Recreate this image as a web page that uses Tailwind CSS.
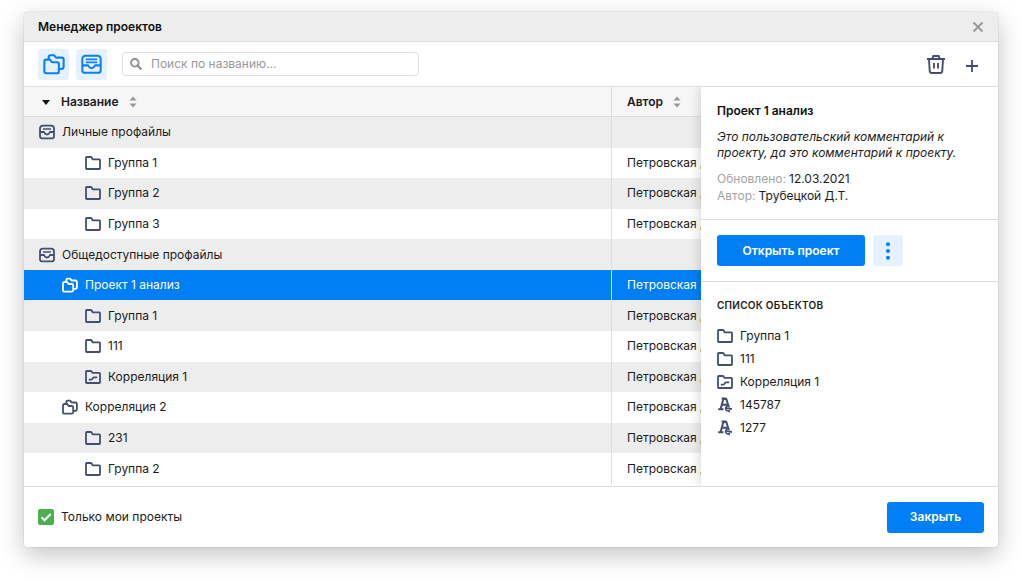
<!DOCTYPE html>
<html lang="ru">
<head>
<meta charset="utf-8">
<meta name="viewport" content="width=device-width, initial-scale=1">
<title>Менеджер проектов</title>
<script src="https://cdn.jsdelivr.net/npm/@tailwindcss/browser@4"></script>
</head>
<body class="flex h-screen flex-col bg-white px-6 pt-3 pb-[35px] font-['Inter',sans-serif] text-xs text-[#1c1c1c]">
<svg class="hidden" aria-hidden="true">
  <symbol id="folder" viewBox="0 0 16 16"><path d="M1 13.300V2.700q0-.7.7-.7h4.100q.5 0 .8.500l.9 1.500q.2.400.7.400h6.100q.7 0 .7.700v8.200q0 .7-.7.700H1.700q-.7 0-.7-.7Z" fill="none" stroke="currentColor" stroke-width="1.800"/></symbol>
  <symbol id="chart" viewBox="0 0 16 16"><path d="M1 13.300V2.700q0-.7.7-.7h4.100q.5 0 .8.500l.7 1q.2.400.7.400h6.300q.7 0 .7.700v8.700q0 .7-.7.700H1.700q-.7 0-.7-.7Z" fill="none" stroke="currentColor" stroke-width="1.800"/><path d="M3.800 10.600h2.400q.8 0 1.200-.7l.4-.8q.4-.7 1.200-.7h3.200" fill="none" stroke="currentColor" stroke-width="1.800"/></symbol>
  <symbol id="folders" viewBox="0 0 24 24"><path d="M1.500 9.200q0-2 2-2h3.600q.8 0 1.200.7l1 1.600q.4.600 1.200.600h4.800q2 0 2 2v8q0 2-2 2H3.500q-2 0-2-2Z" fill="none" stroke="currentColor" stroke-width="2.300" stroke-linejoin="round"/><path d="M6.200 7V4.400q0-2 2-2h3.300q.8 0 1.200.7l.8 1.300q.4.600 1.200.600h5.600q2.200 0 2.200 2.200v7.600q0 2.700-2.700 2.700h-2.300" fill="none" stroke="currentColor" stroke-width="2.300" stroke-linejoin="round"/></symbol>
  <symbol id="folders-small" viewBox="0 0 16 16"><path d="M1 6.400q0-1.400 1.400-1.400h2.400q.5 0 .8.500l.7 1.100q.3.400.8.400h2.700q1.400 0 1.400 1.400v4.800q0 1.400-1.400 1.400H2.400Q1 14.600 1 13.200Z" fill="none" stroke="currentColor" stroke-width="1.800"/><path d="M4.300 5V3q0-1.400 1.400-1.400h2.100q.5 0 .8.500l.7 1q.3.400.8.400h3.400q1.400 0 1.400 1.400v5q0 1.900-1.900 1.900h-1.500" fill="none" stroke="currentColor" stroke-width="1.800"/></symbol>
  <symbol id="tray" viewBox="0 0 24 24"><path d="M1.500 13V6q0-4 4-4h13q4 0 4 4v7M1.500 13v5.500q0 3 3 3h15q3 0 3-3V13h-6q-.6 0-.9.600-1.200 2.600-3.600 2.600t-3.600-2.600q-.3-.6-.9-.6Z" fill="none" stroke="currentColor" stroke-width="2.300" stroke-linejoin="round"/><path d="M5.500 6.200h13M5.500 9.700h13" stroke="currentColor" stroke-width="2"/></symbol>
  <symbol id="tray-small" viewBox="0 0 16 16"><path d="M1 8V4.500Q1 1.700 3.800 1.700h8.400Q15 1.700 15 4.500V8M1 8v4.300q0 2 2 2h10q2 0 2-2V8h-3.700q-.4 0-.6.500-.8 2-2.700 2t-2.700-2Q5.100 8 4.700 8Z" fill="none" stroke="currentColor" stroke-width="1.800"/><path d="M4 5.100h8" stroke="currentColor" stroke-width="1.500"/></symbol>
  <symbol id="sort" viewBox="0 0 8 12"><path d="M4 .5 7.500 4.500H.5ZM4 11.500.5 7.500h7Z" fill="#999"/></symbol>
  <symbol id="glyph" viewBox="0 0 16 16"><path d="M3.600 12 6.400 2h2.900l2.200 7M5.300 7.800h4.900M4.600 1.600h4.600M1.200 12.200h5.300" fill="none" stroke="currentColor" stroke-width="2"/><path d="M12.600 9.600q-1.700-1.200-3.200.1-1.500 1.700-.1 3.400 1.600 1.400 3.500-.1M9 11.300h4.300M11.300 13.400l1.500 1.900M12.600 11.900h2.400" fill="none" stroke="currentColor" stroke-width="1.600"/></symbol>
</svg>

<main class="flex min-h-0 flex-1 flex-col overflow-clip rounded-[4px] bg-white shadow-[0_0_1px_rgba(0,0,0,0.4),0_8px_24px_rgba(0,0,0,0.24)]" role="dialog" aria-labelledby="title">
  <header class="flex h-[30px] shrink-0 items-center justify-between border-b border-[#dcdcdc] bg-[#ededed] px-[14px]">
    <h1 id="title" class="font-semibold text-[#111]">Менеджер проектов</h1>
    <button type="button" aria-label="Закрыть окно" class="text-[#999]"><svg class="size-3" viewBox="0 0 12 12"><path d="m1.500 1.500 9 9m0-9-9 9" stroke="currentColor" stroke-width="2"/></svg></button>
  </header>

  <div class="flex h-[45px] shrink-0 items-center border-b border-[#dcdcdc] pr-5 pl-[14px]">
    <button type="button" aria-label="Проекты" class="flex size-[31px] items-center justify-center rounded-[3px] bg-[#e5f1ff] text-[#0880f8]"><svg class="size-[22px]"><use href="#folders"/></svg></button>
    <button type="button" aria-label="Профайлы" class="ml-[7px] flex size-[31px] items-center justify-center rounded-[3px] bg-[#e5f1ff] text-[#0880f8]"><svg class="size-[21px]"><use href="#tray"/></svg></button>
    <label class="ml-[15px] flex h-6 w-[297px] items-center rounded-[4px] border border-[#dedede] pl-[7px]">
      <svg class="size-3 shrink-0 text-[#8f8f8f]" viewBox="0 0 12 12"><circle cx="4.800" cy="4.800" r="3.800" fill="none" stroke="currentColor" stroke-width="1.800"/><path d="m7.500 7.500 4 4" stroke="currentColor" stroke-width="2.200"/></svg>
      <input type="search" aria-label="Поиск по названию" placeholder="Поиск по названию..." class="ml-[9px] min-w-0 flex-1 bg-transparent outline-none placeholder:text-[#999]">
    </label>
    <button type="button" aria-label="Удалить" class="ml-auto text-[#424f73]"><svg class="size-5" viewBox="0 0 20 20"><path d="M1 5h18" stroke="currentColor" stroke-width="2"/><path d="M6.500 4.500 7.300 2h5.400l.8 2.500M3 5l.7 11.700q.1 2.300 2.300 2.300h8q2.200 0 2.300-2.300L17 5M8 9v5.500M12 9v5.500" fill="none" stroke="currentColor" stroke-width="1.900"/></svg></button>
    <button type="button" aria-label="Добавить" class="mt-1 ml-5 text-[#424f73]"><svg class="size-3" viewBox="0 0 12 12"><path d="M6 0v12M0 6h12" stroke="currentColor" stroke-width="1.800"/></svg></button>
  </div>

  <div class="flex min-h-0 flex-1">
    <div class="min-w-0 flex-1 overflow-hidden pb-0.5">
      <table class="h-full w-full table-fixed border-collapse text-left whitespace-nowrap">
        <colgroup><col><col class="w-[90px]"></colgroup>
        <thead>
          <tr class="h-[30px] bg-[#f6f6f6] shadow-[inset_0_-1px_#dcdcdc]">
            <th class="p-0 font-semibold"><div class="flex items-center pl-[18px]"><svg class="h-[5px] w-2" viewBox="0 0 8 5"><path d="M0 0h8L4 5Z" fill="#111"/></svg><span class="ml-[11px]">Название</span><svg class="ml-[10px] h-3 w-2"><use href="#sort"/></svg></div></th>
            <th class="p-0 font-semibold shadow-[inset_1px_0_#dcdcdc]"><div class="flex items-center pl-4">Автор<svg class="ml-[10px] h-3 w-2"><use href="#sort"/></svg></div></th>
          </tr>
        </thead>
        <tbody class="[&_svg]:size-4 [&_svg]:shrink-0 [&_svg]:text-[#424f73] [&_td:last-child]:pl-4 [&_td:last-child]:shadow-[inset_1px_0_#dedede] [&_td]:p-0 [&_td>div]:flex [&_td>div]:items-center [&_td>div]:gap-[7px] [&_tr:nth-child(odd)]:bg-[#ededed]">
          <tr><td><div class="pl-[15px]"><svg><use href="#tray-small"/></svg>Личные профайлы</div></td><td></td></tr>
          <tr><td><div class="pl-[61px]"><svg><use href="#folder"/></svg>Группа 1</div></td><td>Петровская Д.Т.</td></tr>
          <tr><td><div class="pl-[61px]"><svg><use href="#folder"/></svg>Группа 2</div></td><td>Петровская Д.Т.</td></tr>
          <tr><td><div class="pl-[61px]"><svg><use href="#folder"/></svg>Группа 3</div></td><td>Петровская Д.Т.</td></tr>
          <tr><td><div class="pl-[15px]"><svg><use href="#tray-small"/></svg>Общедоступные профайлы</div></td><td></td></tr>
          <tr class="bg-[#007ff5] text-white" aria-selected="true"><td><div class="pl-[38px]"><svg class="text-white!"><use href="#folders-small"/></svg>Проект 1 анализ</div></td><td>Петровская Д.Т.</td></tr>
          <tr><td><div class="pl-[61px]"><svg><use href="#folder"/></svg>Группа 1</div></td><td>Петровская Д.Т.</td></tr>
          <tr><td><div class="pl-[61px]"><svg><use href="#folder"/></svg>111</div></td><td>Петровская Д.Т.</td></tr>
          <tr><td><div class="pl-[61px]"><svg><use href="#chart"/></svg>Корреляция 1</div></td><td>Петровская Д.Т.</td></tr>
          <tr><td><div class="pl-[38px]"><svg><use href="#folders-small"/></svg>Корреляция 2</div></td><td>Петровская Д.Т.</td></tr>
          <tr><td><div class="pl-[61px]"><svg><use href="#folder"/></svg>231</div></td><td>Петровская Д.Т.</td></tr>
          <tr><td><div class="pl-[61px]"><svg><use href="#folder"/></svg>Группа 2</div></td><td>Петровская Д.Т.</td></tr>
        </tbody>
      </table>
    </div>

    <aside class="relative w-[297px] shrink-0 bg-white shadow-[0_0_12px_rgba(0,0,0,0.2)] [clip-path:inset(0_0_0_-20px)]">
      <section class="border-b border-[#dcdcdc] px-4 pt-4 pb-[15px]">
        <h2 class="leading-[15px] font-semibold text-[#111]">Проект 1 анализ</h2>
        <p class="mt-[11px] leading-[16px] italic">Это пользовательский комментарий к проекту, да это комментарий к проекту.</p>
        <dl class="mt-[9px] leading-[17px]">
          <div class="flex gap-[3px]"><dt class="text-[#a3a3a3]">Обновлено:</dt><dd>12.03.2021</dd></div>
          <div class="flex gap-[3px]"><dt class="text-[#a3a3a3]">Автор:</dt><dd>Трубецкой Д.Т.</dd></div>
        </dl>
      </section>
      <section class="flex gap-2 border-b border-[#dcdcdc] px-4 py-[15px]">
        <button type="button" class="h-[31px] w-[148px] rounded-[3px] bg-[#007ff5] font-semibold text-white">Открыть проект</button>
        <button type="button" aria-label="Ещё" class="flex h-[31px] w-[30px] items-center justify-center rounded-[3px] bg-[#e5f1ff] text-[#007ff5]"><svg class="h-[18px] w-1" viewBox="0 0 4 18" fill="currentColor"><circle cx="2" cy="2.200" r="2"/><circle cx="2" cy="9" r="2"/><circle cx="2" cy="15.800" r="2"/></svg></button>
      </section>
      <section class="px-4 pt-4">
        <h3 class="text-[10px] leading-[15px] font-semibold tracking-wide">СПИСОК ОБЪЕКТОВ</h3>
        <ul class="mt-[11px] leading-[23px] [&_li]:flex [&_li]:items-center [&_li]:gap-[7px] [&_svg]:size-4 [&_svg]:text-[#424f73]">
          <li><svg><use href="#folder"/></svg>Группа 1</li>
          <li><svg><use href="#folder"/></svg>111</li>
          <li><svg><use href="#chart"/></svg>Корреляция 1</li>
          <li><svg><use href="#glyph"/></svg>145787</li>
          <li><svg><use href="#glyph"/></svg>1277</li>
        </ul>
      </section>
    </aside>
  </div>

  <footer class="relative flex h-[61px] shrink-0 items-center justify-between border-t border-[#dcdcdc] bg-white px-[14px]">
    <label class="flex items-center gap-[7px]">
      <span class="grid size-4 place-items-center">
        <input type="checkbox" checked class="col-start-1 row-start-1 size-4 appearance-none rounded-[2px] border border-[#4caf50] bg-white checked:bg-[#4caf50]">
        <svg class="pointer-events-none col-start-1 row-start-1 size-3" viewBox="0 0 12 12"><path d="m1.500 6.300 3 3L10.700 3" fill="none" stroke="#fff" stroke-width="2"/></svg>
      </span>
      Только мои проекты
    </label>
    <button type="button" class="h-[31px] w-[97px] rounded-[3px] bg-[#007ff5] font-semibold text-white">Закрыть</button>
  </footer>
</main>
</body>
</html>
